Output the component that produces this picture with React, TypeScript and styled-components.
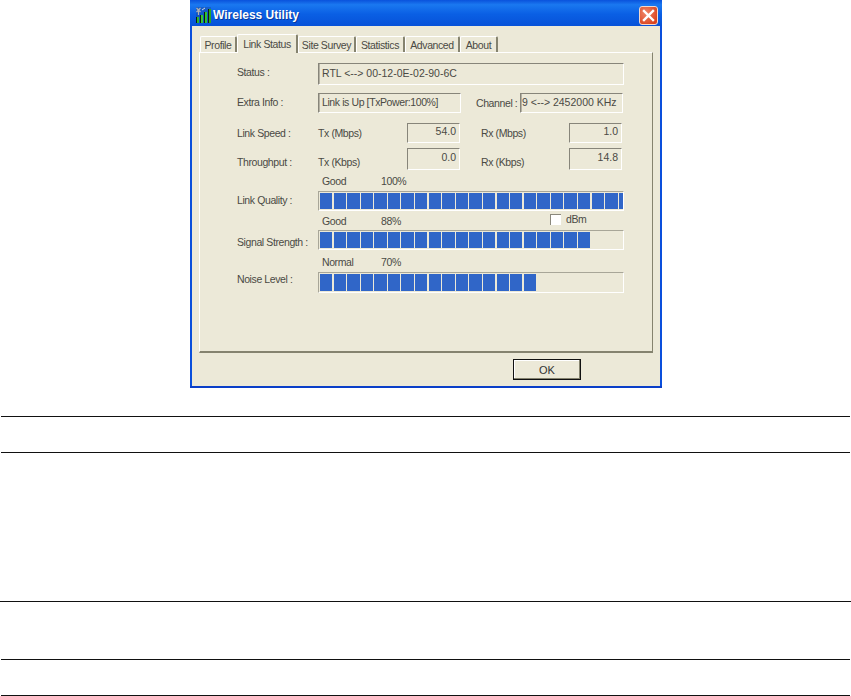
import React from "react";
import styled, { createGlobalStyle } from "styled-components";

const GlobalStyle = createGlobalStyle`
    html, body { margin: 0; padding: 0; background: #fff; }
    body {
        font-family: "Liberation Sans", Arial, sans-serif;
        font-size: 10.5px;
        letter-spacing: -0.4px;
        color: #4a4a44;
    }
`;

const TABS = [
    { name: "Profile", width: 37 },
    { name: "Link Status", width: 61, active: true },
    { name: "Site Survey", width: 58 },
    { name: "Statistics", width: 49 },
    { name: "Advanced", width: 55 },
    { name: "About", width: 38 },
];

const SEGMENT_STEP = 13.6;

function Meter({ level }: { level: number }) {
    const count = Math.ceil(level / SEGMENT_STEP);
    return (
        <Bar>
            <BarFill style={{ width: level }}>
                {Array.from({ length: count }, (_, i) => <Segment key={i} />)}
            </BarFill>
        </Bar>
    );
}

function SignalIcon() {
    return (
        <svg width="15" height="16" viewBox="0 0 15 16">
            <rect x="0" y="0" width="15" height="16" fill="#1c3f8a" opacity="0.35" />
            <path d="M0.5 1l4 4M4.5 1l-4 4M2.5 3v5" stroke="#b0b0b0" strokeWidth="1.2" fill="none" />
            <path d="M6 3l3-2" stroke="#d8d8d8" strokeWidth="1" fill="none" />
            <rect x="0" y="10" width="3" height="6" fill="#101810" />
            <rect x="1" y="10" width="2" height="6" fill="#2bb52b" />
            <rect x="4" y="8" width="3" height="8" fill="#101810" />
            <rect x="5" y="8" width="2" height="8" fill="#35c835" />
            <rect x="8" y="5" width="3" height="11" fill="#101810" />
            <rect x="9" y="5" width="2" height="11" fill="#2ec42e" />
            <rect x="12" y="2" width="3" height="14" fill="#101810" />
            <rect x="13" y="2" width="2" height="14" fill="#25a825" />
        </svg>
    );
}

export default function App() {
    return (
        <Page>
            <GlobalStyle />
            <Window>
                <TitleBar>
                    <SignalIcon />
                    <Title>Wireless Utility</Title>
                    <CloseButton>
                        <svg width="13" height="13" viewBox="0 0 13 13">
                            <path d="M2 2l9 9M11 2l-9 9" stroke="#fff" strokeWidth="2.4" strokeLinecap="square" />
                        </svg>
                    </CloseButton>
                </TitleBar>
                <Client>
                    <TabStrip>
                        {TABS.map(t => (
                            <Tab key={t.name} $active={t.active} $width={t.width}>{t.name}</Tab>
                        ))}
                    </TabStrip>
                    <Panel>
                        <Row $height={22} $after={8}>
                            <Label $shift={-2}>Status :</Label>
                            <Field $width={306}>RTL &lt;--&gt; 00-12-0E-02-90-6C</Field>
                        </Row>
                        <Row $height={20} $after={10}>
                            <Label $shift={-1}>Extra Info :</Label>
                            <Field $width={143} $tight>Link is Up [TxPower:100%]</Field>
                            <ChannelLabel>Channel :</ChannelLabel>
                            <Field $width={103} $inset={1}>9 &lt;--&gt; 2452000 KHz</Field>
                        </Row>
                        <Row $height={20} $after={5}>
                            <Label>Link Speed :</Label>
                            <UnitLabel>Tx (Mbps)</UnitLabel>
                            <Value>54.0</Value>
                            <RxLabel>Rx (Mbps)</RxLabel>
                            <Value>1.0</Value>
                        </Row>
                        <Row $height={22}>
                            <Label $shift={3}>Throughput :</Label>
                            <UnitLabel $shift={3}>Tx (Kbps)</UnitLabel>
                            <Value>0.0</Value>
                            <RxLabel $shift={3}>Rx (Kbps)</RxLabel>
                            <Value>14.8</Value>
                        </Row>
                        <CaptionRow $height={21}>
                            <QualityWord>Good</QualityWord>
                            <span>100%</span>
                        </CaptionRow>
                        <Row $height={20}>
                            <Label $shift={-1}>Link Quality :</Label>
                            <Meter level={303} />
                        </Row>
                        <CaptionRow $height={19}>
                            <QualityWord>Good</QualityWord>
                            <Percent>88%</Percent>
                            <CheckBox />
                            <DbmLabel>dBm</DbmLabel>
                        </CaptionRow>
                        <Row $height={20}>
                            <Label $shift={2}>Signal Strength :</Label>
                            <Meter level={270} />
                        </Row>
                        <CaptionRow $height={22}>
                            <QualityWord>Normal</QualityWord>
                            <span>70%</span>
                        </CaptionRow>
                        <Row $height={21}>
                            <Label $shift={-4}>Noise Level :</Label>
                            <Meter level={216} />
                        </Row>
                    </Panel>
                    <Footer>
                        <OkButton>OK</OkButton>
                    </Footer>
                </Client>
            </Window>
            <Rule $top={28} />
            <Rule $top={35} />
            <Rule $top={148} $full />
            <Rule $top={57} />
            <Rule $top={35} />
        </Page>
    );
}

const Page = styled.div`
    width: 851px;
    height: 696px;
    overflow: hidden;
`;

const Window = styled.div`
    width: 472px;
    height: 388px;
    margin-left: 190px;
    background: #0a4fdc;
    border-bottom: 2px solid #0a3fc8;
    box-sizing: border-box;
    display: flex;
    flex-direction: column;
`;

const TitleBar = styled.div`
    height: 26px;
    flex: none;
    box-sizing: border-box;
    padding: 5px 4px 1px 6px;
    display: flex;
    align-items: center;
    gap: 2px;
    background: linear-gradient(180deg, #0a52dc 0%, #1a78f0 18%, #0a5fe4 55%, #0752d8 100%);
`;

const Title = styled.div`
    flex: 1;
    color: #fff;
    font-size: 12px;
    font-weight: 700;
    letter-spacing: 0;
    text-shadow: 1px 1px 0 #0a3a9c;
`;

const CloseButton = styled.div`
    width: 19px;
    height: 19px;
    border: 1px solid #f3d8cc;
    border-radius: 3px;
    box-sizing: border-box;
    background: radial-gradient(circle at 35% 35%, #f0886a, #d9431f 80%);
    display: flex;
    align-items: center;
    justify-content: center;
`;

const Client = styled.div`
    flex: 1;
    margin: 0 2px;
    padding: 0 7px;
    background: #ece9d8;
    display: flex;
    flex-direction: column;
`;

const TabStrip = styled.div`
    height: 26px;
    flex: none;
    padding-left: 1px;
    display: flex;
    align-items: flex-end;
`;

const Tab = styled.div<{ $active?: boolean; $width: number }>`
    width: ${p => p.$width}px;
    height: ${p => (p.$active ? 19 : 16)}px;
    box-sizing: border-box;
    display: flex;
    align-items: center;
    justify-content: center;
    border-top: 1px solid #fff;
    border-left: 1px solid #fff;
    border-right: 2px solid #85836f;
    border-radius: 2px 2px 0 0;
    position: relative;
    z-index: ${p => (p.$active ? 1 : 0)};
    margin-bottom: ${p => (p.$active ? -1 : 0)}px;
    background: #ece9d8;
`;

const Panel = styled.div`
    height: 301px;
    flex: none;
    box-sizing: border-box;
    padding: 10px 0 0 37px;
    border-top: 1px solid #fff;
    border-left: 1px solid #fff;
    border-right: 1px solid #85836f;
    border-bottom: 2px solid #85836f;
`;

const Row = styled.div<{ $height: number; $after?: number }>`
    height: ${p => p.$height}px;
    margin-bottom: ${p => p.$after ?? 0}px;
    display: flex;
    align-items: center;
`;

const CaptionRow = styled(Row)`
    padding-left: 85px;
    padding-top: 1px;
    box-sizing: border-box;
`;

const QualityWord = styled.span`
    width: 59px;
`;

const Percent = styled.span`
    width: 169px;
`;

/* $shift nudges a caption off the row's centre line, the source dialog is not aligned either */
const Label = styled.div<{ $shift?: number }>`
    width: 81px;
    flex: none;
    margin-top: ${p => (p.$shift ?? 0) * 2}px;
`;

const Field = styled.div<{ $width: number; $tight?: boolean; $inset?: number }>`
    width: ${p => p.$width}px;
    height: 100%;
    flex: none;
    box-sizing: border-box;
    padding: 0 3px 3px ${p => p.$inset ?? 3}px;
    display: flex;
    align-items: center;
    white-space: nowrap;
    letter-spacing: ${p => (p.$tight ? -0.4 : 0)}px;
    border-top: 1px solid #87857a;
    border-left: 1px solid #87857a;
    border-bottom: 1px solid #fff;
    border-right: 1px solid #fff;
    box-shadow: inset 1px 0 0 #b5b2a4;
`;

const ChannelLabel = styled.div`
    width: 44px;
    flex: none;
    margin-left: 15px;
    white-space: nowrap;
`;

const UnitLabel = styled(Label)`
    width: 89px;
`;

const RxLabel = styled(Label)`
    width: 88px;
    margin-left: 21px;
`;

const Value = styled.div`
    width: 53px;
    height: 100%;
    flex: none;
    box-sizing: border-box;
    padding: 0 3px 5px;
    display: flex;
    align-items: center;
    justify-content: flex-end;
    letter-spacing: 0;
    border-top: 1px solid #87857a;
    border-left: 1px solid #87857a;
    border-bottom: 1px solid #fff;
    border-right: 1px solid #fff;
`;

const Bar = styled.div`
    width: 306px;
    height: 100%;
    box-sizing: border-box;
    padding: 1px 0 1px 1px;
    border-top: 1px solid #a8a698;
    border-left: 1px solid #a8a698;
    border-bottom: 1px solid #fff;
    border-right: 1px solid #fff;
`;

const BarFill = styled.div`
    height: 100%;
    overflow: hidden;
    display: flex;
`;

const Segment = styled.div`
    width: 12.4px;
    height: 100%;
    flex: none;
    margin-right: 1.2px;
    background: #3066c8;
`;

const CheckBox = styled.div`
    width: 11px;
    height: 11px;
    margin: 0 5px 4px 0;
    box-sizing: border-box;
    background: #fff;
    border-top: 1px solid #8a887c;
    border-left: 1px solid #8a887c;
`;

const DbmLabel = styled.span`
    margin-bottom: 4px;
`;

const Footer = styled.div`
    flex: 1;
    display: flex;
    justify-content: flex-end;
    padding: 6px 72px 0 0;
`;

const OkButton = styled.div`
    width: 68px;
    height: 21px;
    box-sizing: border-box;
    display: flex;
    align-items: center;
    justify-content: center;
    border: 1px solid #111;
    box-shadow: inset -1px -1px 0 #85836f, inset 1px 1px 0 #fff;
    background: #ece9d8;
    color: #333;
    font-size: 11px;
    letter-spacing: 0;
`;

const Rule = styled.div<{ $top: number; $full?: boolean }>`
    height: 1px;
    margin: ${p => p.$top}px ${p => (p.$full ? 0 : 1)}px 0;
    background: #111;
`;
